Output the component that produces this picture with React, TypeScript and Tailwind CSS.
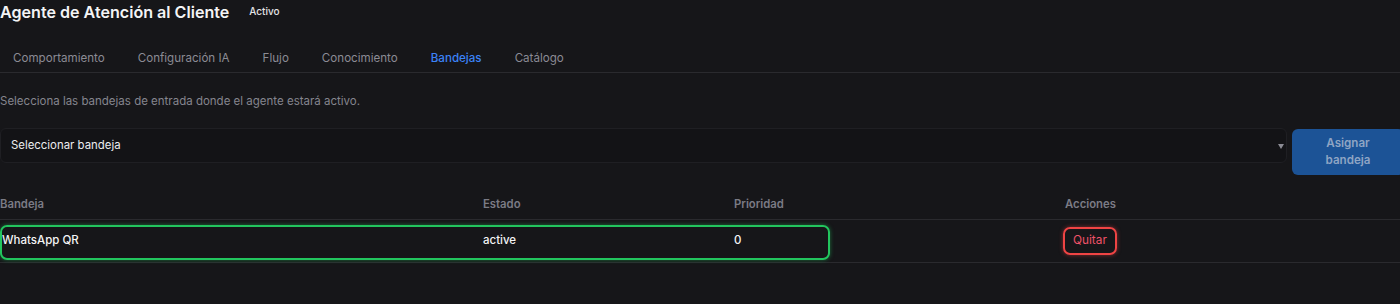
import React from "react";

const tabs = ["Comportamiento", "Configuración IA", "Flujo", "Conocimiento", "Bandejas", "Catálogo"];

export default function App() {
  return (
    <div
      className="w-[1400px] h-[304px] overflow-hidden bg-[#161619] text-white"
      style={{ fontFamily: "Inter, 'Noto Sans', sans-serif" }}
    >
      <div className="flex items-center h-[24px]">
        <h1 className="text-[16.1px] leading-[24px] font-semibold text-[#f4f4f5]">
          Agente de Atención al Cliente
        </h1>
        <span className="ml-[20px] mt-[-1px] text-[10px] font-medium text-[#e4e4e7]">Activo</span>
      </div>

      <div className="mt-[21px] flex gap-[33px] pl-[13px] border-b border-[#2a2a2e] h-[28px]">
        {tabs.map((t) => (
          <div
            key={t}
            className={
              "text-[11.6px] leading-[26px] " +
              (t === "Bandejas" ? "text-[#3b82f6] font-medium" : "text-[#8b8b94]")
            }
          >
            {t}
          </div>
        ))}
      </div>

      <p className="mt-[19px] text-[11.5px] leading-[18px] text-[#85858e]">
        Selecciona las bandejas de entrada donde el agente estará activo.
      </p>

      <div className="mt-[18px] flex items-start gap-[5px]">
        <div className="relative flex-1 h-[35px] rounded-md border border-[#1f1f23] bg-[#131316] flex items-center pl-[10px]">
          <span className="text-[11.4px] text-[#ececef]">Seleccionar bandeja</span>
          <span className="absolute right-[2px] top-[15px] w-0 h-0 border-l-[3px] border-r-[3px] border-t-[5px] border-l-transparent border-r-transparent border-t-[#8b8b94]" />
        </div>
        <button className="w-[112px] -mr-[4px] h-[46px] mt-[1px] rounded-md bg-[#1c5396] text-[11.6px] leading-[17px] font-semibold text-[#8fa5c4] px-2">
          Asignar
          <br />
          bandeja
        </button>
      </div>

      <div className="mt-[15px]">
        <div className="grid grid-cols-[483px_251px_331px_335px] h-[30px] items-center border-b border-[#2a2a2e] text-[11.3px] font-semibold text-[#7b7b85]">
          <div>Bandeja</div>
          <div>Estado</div>
          <div>Prioridad</div>
          <div>Acciones</div>
        </div>
        <div className="relative grid grid-cols-[483px_251px_331px_335px] h-[43px] items-center border-b border-[#2a2a2e] text-[11.5px] font-medium text-[#f4f4f5]">
          <div
            className="absolute left-0 top-[5px] w-[830px] h-[35px] rounded-[7px] border-2 border-[#22c55e]"
            style={{ boxShadow: "0 0 4px rgba(34,197,94,0.5)" }}
          />
          <div className="pl-[2px]">WhatsApp QR</div>
          <div>active</div>
          <div>0</div>
          <div>
            <button
              className="ml-[-2px] h-[28px] px-[8px] rounded-[7px] border-2 border-[#ef4444] text-[11.8px] text-[#f05268] font-normal"
              style={{ boxShadow: "0 0 4px rgba(239,68,68,0.5)" }}
            >
              Quitar
            </button>
          </div>
        </div>
      </div>
    </div>
  );
}
